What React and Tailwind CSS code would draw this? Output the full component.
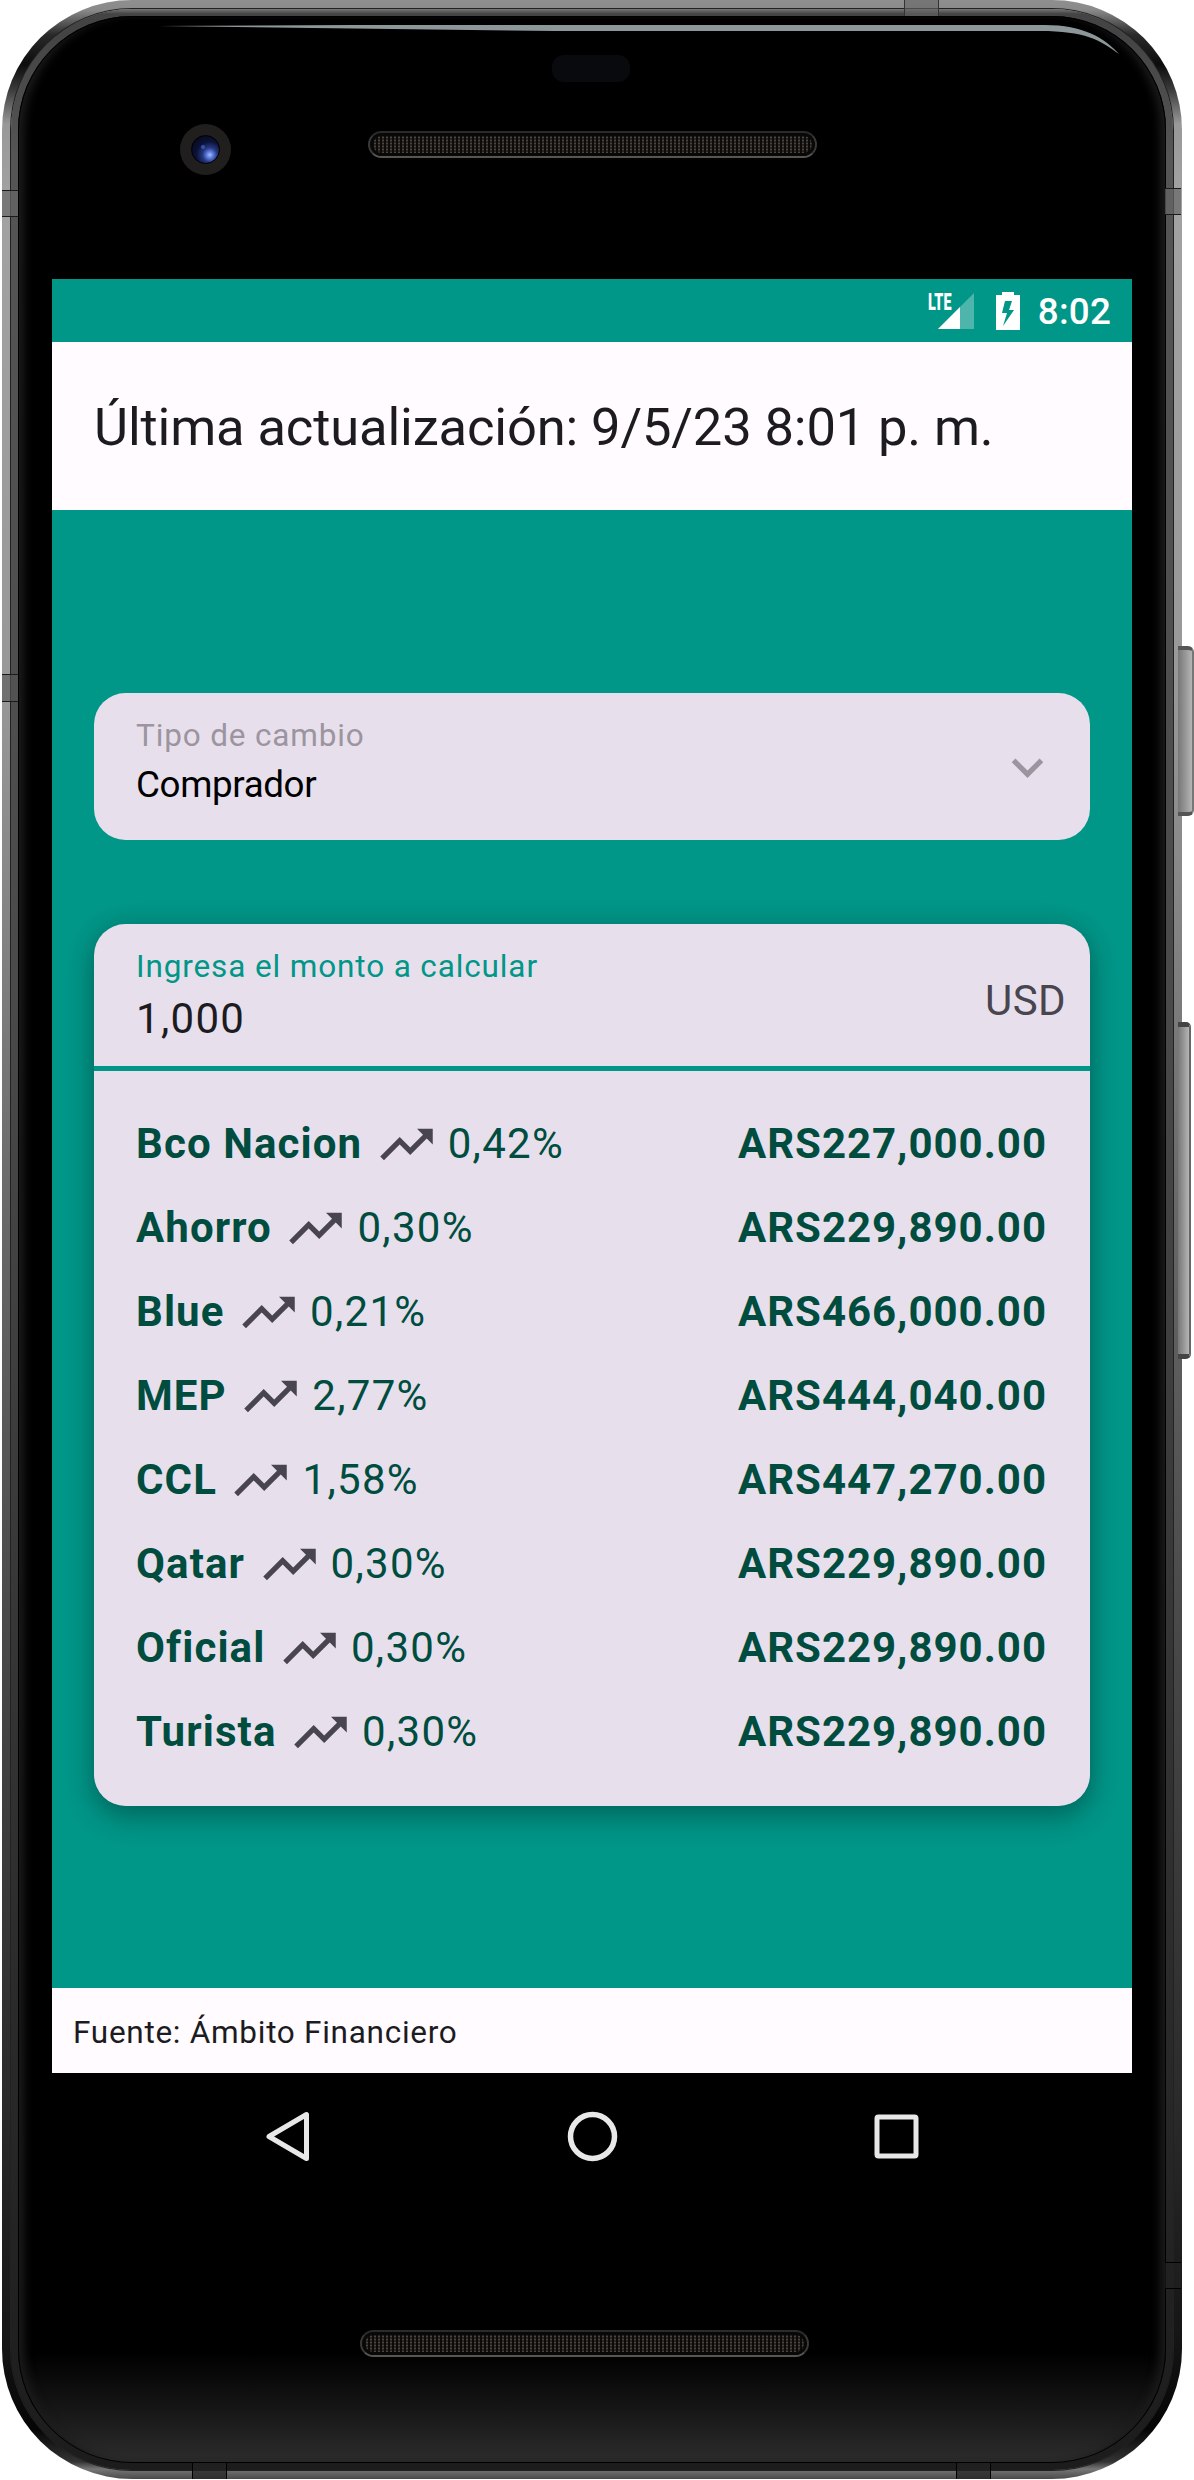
const rates = [
  ["Bco Nacion", "0,42%", "ARS227,000.00"],
  ["Ahorro", "0,30%", "ARS229,890.00"],
  ["Blue", "0,21%", "ARS466,000.00"],
  ["MEP", "2,77%", "ARS444,040.00"],
  ["CCL", "1,58%", "ARS447,270.00"],
  ["Qatar", "0,30%", "ARS229,890.00"],
  ["Oficial", "0,30%", "ARS229,890.00"],
  ["Turista", "0,30%", "ARS229,890.00"],
];

function TrendUp() {
  return (
    <svg viewBox="0 0 24 24" className="mt-[2px] size-[63px] shrink-0" fill="#49454f">
      <path d="M16 6l2.29 2.29-4.88 4.88-4-4L2 16.59 3.41 18l6-6 4 4 6.3-6.29L22 12V6z" />
    </svg>
  );
}

function SpeakerGrille() {
  return (
    <div className="h-[27px] w-[449px] rounded-full border-2 border-t-[#2b2b2b] border-r-[#3a3938] border-b-[#5a5550] border-l-[#3a3938] bg-[#080808] p-[3px]">
      <div className="h-full w-full rounded-full bg-[#0c0b0a] bg-[radial-gradient(circle,#4c4640_0.9px,transparent_1.3px)] bg-[size:4px_3px]" />
    </div>
  );
}

function Camera() {
  return (
    <div className="flex size-[51px] items-center justify-center rounded-full bg-[#211e1e]">
      <div className="size-[29px] rounded-full border border-black bg-[radial-gradient(circle_at_66%_70%,#a9bdf5_0,#5f7fe0_12%,#26377f_28%,#0b1236_52%,#05060f_100%)]">
        <div className="mt-[9px] ml-[9px] size-[4px] rounded-full bg-[#3552b0]" />
      </div>
    </div>
  );
}

function StatusBar() {
  return (
    <div className="flex h-[63px] items-center justify-end bg-[#009688] pr-[21px]">
      <div className="relative mr-[22px] h-[38px] w-[46px]">
        <svg viewBox="0 0 46 38" className="h-full w-full">
          <path d="M10 37L46 1V37Z" fill="#fff" fillOpacity=".3" />
          <path d="M10 37L32 15V37Z" fill="#fff" />
        </svg>
        <span className="absolute top-[-2px] left-0 origin-left scale-x-[0.61] text-[23.5px] leading-[24px] font-black text-white">LTE</span>
      </div>
      <svg viewBox="0 0 24 38" className="mr-[18px] h-[38px] w-[24px]">
        <path fillRule="evenodd" fill="#fff" d="M6 0H18V3H24V38H0V3H6ZM9 9L6 21H11L7 34L18 18H13L16 9Z" />
      </svg>
      <span className="mt-[3px] text-[36.75px] leading-[42px] font-medium tracking-[0.2px] text-white">8:02</span>
    </div>
  );
}

function AppScreen() {
  return (
    <div className="flex h-[1920px] w-[1080px] flex-col bg-black">
      <StatusBar />
      <header className="flex h-[168px] items-center bg-[#fffbfe] px-[42px] pt-[3px] text-[52.5px] tracking-[-0.14px] text-[#1c1b1f]">
        Última actualización: 9/5/23 8:01 p. m.
      </header>
      <main className="flex h-[1478px] flex-col justify-center gap-[84px] bg-[#009688] px-[42px]">
        <div className="flex h-[147px] items-center justify-between rounded-[31.5px] bg-[#e7e0ec] pr-[31px] pl-[42px]">
          <div className="flex h-full flex-col pt-[22px]">
            <span className="text-[31.5px] leading-[42px] tracking-[0.85px] text-[#9c959f]">Tipo de cambio</span>
            <span className="text-[36.75px] leading-[55px] tracking-[-0.37px] text-black">Comprador</span>
          </div>
          <svg viewBox="0 0 24 24" className="mt-[3px] size-[63px]" fill="#9c959f">
            <path d="M7.41 8.59L12 13.17l4.59-4.58L18 10l-6 6-6-6z" />
          </svg>
        </div>
        <section className="h-[882px] rounded-[31.5px] bg-[#e7e0ec] shadow-[0_12px_28px_rgba(0,0,0,0.26),0_0_24px_rgba(0,0,0,0.12)]">
          <div className="flex h-[147px] items-center justify-between border-b-[5px] border-[#009688] pr-[24px] pl-[42px]">
            <div className="flex h-full flex-col pt-[22px]">
              <span className="text-[31.5px] leading-[42px] tracking-[0.87px] text-[#009688]">Ingresa el monto a calcular</span>
              <span className="text-[42px] leading-[62px] tracking-[1.31px] text-[#1c1b1f]">1,000</span>
            </div>
            <span className="mt-[11px] text-[42px] leading-[63px] tracking-[0.4px] text-[#49454f]">USD</span>
          </div>
          <div className="flex flex-col pt-[31px] pr-[43px] pl-[42px] text-[42px] text-[#004d40]">
            {rates.map(([name, change, amount]) => (
              <div key={name} className="flex h-[84px] items-center">
                <span className="mr-[12.5px] font-bold tracking-[1.1px]">{name}</span>
                <TrendUp />
                <span className="ml-[10px] tracking-[1.31px]">{change}</span>
                <span className="ml-auto font-bold tracking-[0.98px]">{amount}</span>
              </div>
            ))}
          </div>
        </section>
      </main>
      <footer className="flex h-[85px] items-center bg-[#fffbfe] px-[21px] pt-[4px] text-[31.5px] tracking-[0.72px] text-[#1c1b1f]">
        Fuente: Ámbito Financiero
      </footer>
      <nav className="flex h-[126px] items-center justify-center gap-[241px]">
        <svg viewBox="0 0 63 63" className="size-[63px]" fill="none" stroke="#e8e8e8" strokeWidth="5" strokeLinejoin="round">
          <path d="M49.5 9.5V53.5L12 31.5Z" />
        </svg>
        <svg viewBox="0 0 63 63" className="size-[63px]" fill="none" stroke="#e8e8e8" strokeWidth="5.5">
          <circle cx="31.5" cy="31.5" r="22" />
        </svg>
        <svg viewBox="0 0 63 63" className="size-[63px]" fill="none" stroke="#e8e8e8" strokeWidth="5">
          <rect x="12" y="12" width="39" height="39" rx="1.5" />
        </svg>
      </nav>
    </div>
  );
}

export default function App() {
  return (
    <div className="relative h-[2480px] w-[1194px] overflow-hidden bg-white font-['Roboto',sans-serif]">
      {/* Side buttons */}
      <div className="absolute top-[646px] left-[1178px] h-[170px] w-[16px] rounded-r-[6px] border-y-[4px] border-y-[#555] border-r-2 border-r-[#777] bg-linear-to-r from-[#777] to-[#b5b5b5]" />
      <div className="absolute top-[1022px] left-[1178px] h-[337px] w-[13px] rounded-r-[5px] border-y-[5px] border-y-[#444] border-r-2 border-r-[#666] bg-linear-to-r from-[#777] to-[#b5b5b5]" />

      {/* Metal rim, bezel and glass */}
      <div className="ml-[2px] h-[2479px] w-[1179.5px] rounded-[130px] bg-[linear-gradient(180deg,#8f8f8f_0,#8a8a8a_0.4%,#2a2a2a_1.4%,#0c0c0c_2.6%,#3a3a3a_3.6%,#999_5%,#a2a2a2_8%,#989898_28%,#666_50%,#4a4a4a_65%,#2a2a2a_85%,#161616_94%,#050505_98%,#333_99.3%,#777_99.6%,#4a4a4a_100%)] p-[9px]">
        <div className="h-full w-full rounded-[121px] bg-[linear-gradient(180deg,#777_0,#444_0.2%,#444_1%,#555_6%,#4a4a4a_40%,#333_70%,#1c1c1c_100%)] p-[7px] shadow-[0_0_0_1px_#222]">
          <div className="h-full w-full rounded-[114px] bg-[linear-gradient(180deg,#000_0,#000_95.5%,#181818_98%,#2d2d2d_100%)] px-[34px] shadow-[inset_0_0_0_1px_#000,inset_10px_0_10px_-4px_#1c1c1c,inset_-10px_0_10px_-4px_#1c1c1c]">
            <div className="relative h-[263px]">
              <div className="absolute top-[39px] left-[500px] h-[27px] w-[78px] rounded-[12px] bg-[#080a0e]" />
              <div className="absolute top-[108px] left-[128px]">
                <Camera />
              </div>
              <div className="absolute top-[115px] left-[316px]">
                <SpeakerGrille />
              </div>
            </div>
            <AppScreen />
            <div className="flex pt-[131px] pl-[308px]">
              <SpeakerGrille />
            </div>
          </div>
        </div>
      </div>

      {/* Glass reflection along the top edge */}
      <svg viewBox="0 0 970 40" className="absolute top-[20px] left-[155px] h-[40px] w-[970px]" fill="#8d9799">
        <path d="M4 6L200 5H890C928 5 950 18 964 34C945 20 930 11 885 11H400Z" />
      </svg>

      {/* Antenna bands */}
      <div className="absolute top-[190px] left-[2px] h-[27px] w-[16px] border-y border-[#1a1a1a] bg-[#666]/70" />
      <div className="absolute top-[674px] left-[2px] h-[28px] w-[16px] border-y border-[#1a1a1a] bg-[#555]/60" />
      <div className="absolute top-[188px] left-[1165px] h-[27px] w-[16px] border-y border-[#1a1a1a] bg-[#666]/70" />
      <div className="absolute top-[2262px] left-[1165px] h-[27px] w-[16px] border-y border-black bg-[#222]/60" />
      <div className="absolute top-0 left-[904px] h-[16px] w-[35px] border-x border-[#333] bg-[#666]/60" />
      <div className="absolute top-[2463px] left-[192px] h-[16px] w-[35px] border-x border-black bg-[#222]/70" />
      <div className="absolute top-[2463px] left-[956px] h-[16px] w-[35px] border-x border-black bg-[#222]/70" />
    </div>
  );
}
